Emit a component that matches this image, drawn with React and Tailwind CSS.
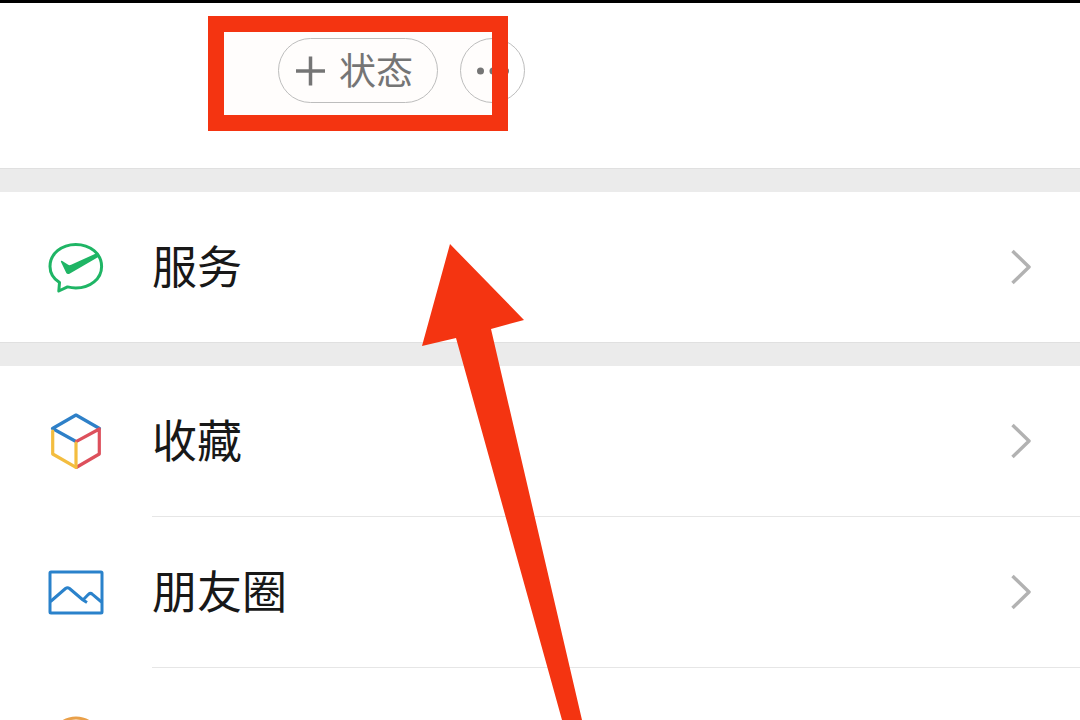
const FONT = "font-['Noto_Sans_CJK_SC',sans-serif]";

function ServiceIcon() {
  return (
    <svg className="w-14 h-14" viewBox="0 0 56 56" fill="none">
      <path
        d="M11.5 43.6C5.6 39.6 2 33.800 2 27.400C2 14.900 13.500 5.400 27.800 5.400S53.600 14.900 53.600 27.400S42.100 49 27.800 49C25 49 22.300 48.600 19.500 47.900L10.800 52Z"
        stroke="#1fb565"
        strokeWidth="3"
        strokeLinejoin="round"
      />
      <path
        d="M13 23C12.500 21.800 13.400 21.400 14.300 22L20.200 25.800C21.100 26.300 22 26.300 23.100 25.800L49.500 13.800L52 17L21.500 34.700C20.200 35.400 18.900 35.200 18.300 34Z"
        fill="#1fb565"
      />
    </svg>
  );
}

function FavoritesIcon() {
  return (
    <svg className="w-14 h-14" viewBox="0 0 56 56" fill="none" strokeWidth="3.200" strokeLinejoin="round" strokeLinecap="round">
      <path d="M4.500 15.500L28 2L51.500 15.500M28 28.500L4.500 15.500" stroke="#2e80c8" />
      <path d="M4.700 18V41L28 54.300" stroke="#f3bd3f" />
      <path d="M28.500 28.300L51.300 16V41L29 54" stroke="#dd505c" />
      <path d="M28 30V54.300" stroke="#f3bd3f" />
    </svg>
  );
}

function MomentsIcon() {
  return (
    <svg className="w-14 h-14" viewBox="0 0 56 56" fill="none" stroke="#2a82cb" strokeWidth="3" strokeLinejoin="round">
      <rect x="2" y="8" width="52" height="41" rx="1" />
      <path d="M2.500 37.500L17.500 24.500Q19.500 23 21.500 24.500L35 36L39 38.500" />
      <path d="M34.500 36.500L40.500 30.300Q42.500 28.500 44.500 30.300L53.500 38" />
    </svg>
  );
}

function StickerIcon() {
  return (
    <svg className="w-14 h-14" viewBox="0 0 56 56" fill="none" stroke="#e9a04a" strokeWidth="3">
      <circle cx="28" cy="28" r="25" />
    </svg>
  );
}

function Chevron() {
  return (
    <svg className="w-6 h-10 shrink-0" viewBox="0 0 24 40" fill="none" stroke="#b2b2b2" strokeWidth="3.500" strokeLinejoin="round">
      <path d="M4.500 4L21 20L4.500 36" />
    </svg>
  );
}

function Row({ icon, label, divider }) {
  return (
    <div className="bg-white">
      <button type="button" aria-label={label || "more"} className="flex w-full items-center gap-12 h-[150px] px-12 text-left">
        {icon}
        <span className="flex-1 pb-1 text-[45px] leading-[60px] text-[#181818]">{label}</span>
        <Chevron />
      </button>
      {divider && <div className="ml-[152px] h-px bg-[#e6e6e6]" />}
    </div>
  );
}

function Gap() {
  return <div className="h-6 bg-[#ebebeb] border-t border-[#e0e0e0]" />;
}

export default function App() {
  return (
    <div className={`${FONT} relative h-screen w-full overflow-hidden bg-white`}>
      <div className="h-[3px] bg-black" />

      {/* status buttons */}
      <header className="relative h-[165px] pl-[278px] pt-[35px] flex items-start gap-[22px]">
        {/* highlight frame */}
        <div className="absolute left-[208px] top-[13px] w-[300px] h-[115px] bg-[#fffdfc]" />
        <button type="button" className="relative flex items-center gap-3 h-[65px] w-40 pl-4 rounded-full border border-[#bdbdbd] text-[#757575]">
          <svg className="w-8 h-8" viewBox="0 0 32 32" stroke="currentColor" strokeWidth="3.500">
            <path d="M1 16H30M15.500 1.500V30.500" />
          </svg>
          <span className="pb-1 text-[37px] leading-[48px]">状态</span>
        </button>
        <button type="button" aria-label="more" className="relative flex items-center justify-center w-[65px] h-[65px] rounded-full border border-[#bdbdbd] text-[#757575]">
          <svg className="w-8 h-2" viewBox="0 0 32 8" fill="currentColor">
            <circle cx="3.500" cy="4" r="3.500" />
            <circle cx="16" cy="4" r="3.500" />
            <circle cx="28.500" cy="4" r="3.500" />
          </svg>
        </button>
        <div className="absolute left-[208px] top-[13px] w-[300px] h-[115px] border-[16px] border-[#f43411]" />
      </header>

      <Gap />
      <Row icon={<ServiceIcon />} label="服务" />
      <Gap />
      <Row icon={<FavoritesIcon />} label="收藏" divider />
      <Row icon={<MomentsIcon />} label="朋友圈" divider />
      <Row icon={<StickerIcon />} />

      {/* arrow pointing at the status button */}
      <svg className="absolute left-[420px] top-[244px] w-[164px] h-[476px] pointer-events-none" viewBox="420 244 164 476">
        <path d="M450 244L524 320L491 329L582 720H562L456 338L422 346Z" fill="#f43411" />
      </svg>
    </div>
  );
}
